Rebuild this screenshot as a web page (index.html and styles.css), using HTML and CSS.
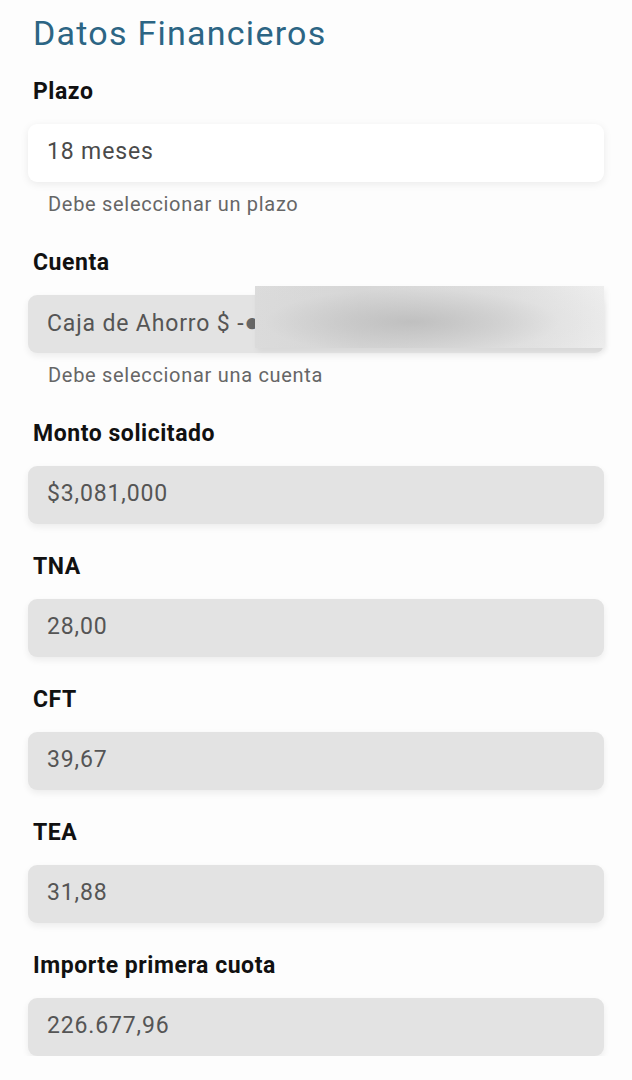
FILE: index.html
```html
<!DOCTYPE html>
<html lang="es">
<head>
<meta charset="utf-8">
<title>Datos Financieros</title>
<link rel="stylesheet" href="styles.css">
</head>
<body>
<main class="page">
  <h1 class="title">Datos Financieros</h1>
  <div class="fields">
    <div class="field">
      <div class="label">Plazo</div>
      <div class="input input-white">18 meses</div>
      <div class="helper">Debe seleccionar un plazo</div>
    </div>
    <div class="field">
      <div class="label">Cuenta</div>
      <div class="input input-account">
        <span class="account-text">Caja de Ahorro $ -<span class="dot">●●●●●●</span></span>
        <span class="redact"></span>
      </div>
      <div class="helper">Debe seleccionar una cuenta</div>
    </div>
    <div class="field">
      <div class="label">Monto solicitado</div>
      <div class="input">$3,081,000</div>
    </div>
    <div class="field">
      <div class="label">TNA</div>
      <div class="input">28,00</div>
    </div>
    <div class="field">
      <div class="label">CFT</div>
      <div class="input">39,67</div>
    </div>
    <div class="field">
      <div class="label">TEA</div>
      <div class="input">31,88</div>
    </div>
    <div class="field">
      <div class="label">Importe primera cuota</div>
      <div class="input">226.677,96</div>
    </div>
  </div>
</main>
</body>
</html>
```
FILE: styles.css
```css
html, body {
  margin: 0;
  padding: 0;
  background: #fdfdfd;
}
body {
  font-family: Roboto, "Liberation Sans", Arial, sans-serif;
  color: #111;
}
.page {
  padding: 13px 28px 0 28px;
}
.title {
  margin: 0 0 25px 5px;
  font-size: 34px;
  line-height: 40px;
  font-weight: 400;
  letter-spacing: 1.25px;
  color: #2c6584;
}
.fields {
  display: flex;
  flex-direction: column;
  gap: 29.5px;
}
.field {
  display: flex;
  flex-direction: column;
}
.label {
  margin: 0 0 17.5px 5px;
  font-size: 23px;
  line-height: 28px;
  font-weight: 700;
  letter-spacing: 0.55px;
  color: #111;
}
.input {
  position: relative;
  height: 58px;
  box-sizing: border-box;
  display: flex;
  align-items: center;
  padding: 0 19px 2px 19px;
  border-radius: 9px;
  background: #e3e3e3;
  box-shadow: 0 3px 7px rgba(0, 0, 0, 0.07);
  font-size: 23px;
  letter-spacing: 0.85px;
  color: #555;
}
.input-white {
  background: #ffffff;
  color: #4a4a4a;
  box-shadow: 0 2px 8px rgba(0, 0, 0, 0.08);
}
.account-text {
  white-space: nowrap;
  overflow: hidden;
}
.dot {
  font-size: 26px;
  letter-spacing: 0;
  color: #666;
}
.redact {
  position: absolute;
  left: 227px;
  right: 0;
  top: -9px;
  height: 62px;
  background:
    radial-gradient(ellipse 70% 90% at 45% 58%, rgba(185,185,185,0.8) 0%, rgba(195,195,195,0.6) 30%, rgba(215,215,215,0.3) 60%, rgba(235,235,235,0) 100%),
    linear-gradient(90deg, #dcdcdc 0%, #d6d6d6 30%, #e0e0e0 70%, #eeeeee 100%);
  box-shadow: 2px 3px 6px rgba(0, 0, 0, 0.06);
}
.helper {
  margin: 10px 0 4px 20px;
  font-size: 20px;
  line-height: 24px;
  letter-spacing: 0.7px;
  color: #666;
}
```
